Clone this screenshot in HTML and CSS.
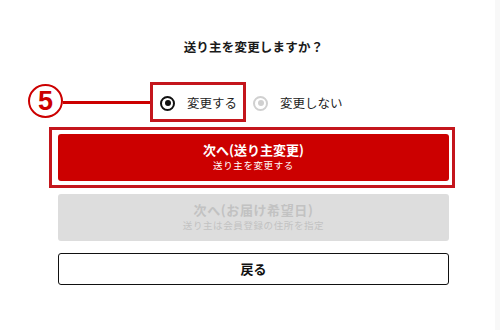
FILE: index.html
```html
<!DOCTYPE html>
<html lang="ja">
<head>
    <meta charset="UTF-8">
    <meta name="viewport" content="width=device-width, initial-scale=1.0">
    <title>送り主の変更</title>
    <link rel="stylesheet" href="styles.css">
</head>
<body>
    <div class="sender-panel">
        <h1 class="panel-title">送り主を変更しますか？</h1>

        <div class="choices">
            <label class="choice choice-on">
                <span class="radio"></span>
                <span class="choice-label">変更する</span>
                <span class="mark-box"></span>
                <span class="callout">
                    <span class="callout-num">5</span>
                    <span class="callout-line"></span>
                </span>
            </label>
            <label class="choice choice-off">
                <span class="radio"></span>
                <span class="choice-label">変更しない</span>
            </label>
        </div>

        <div class="actions">
            <button class="btn btn-primary">
                <span class="btn-main">次へ(送り主変更)</span>
                <span class="btn-sub">送り主を変更する</span>
                <span class="mark-box"></span>
            </button>
            <button class="btn btn-disabled">
                <span class="btn-main">次へ(お届け希望日)</span>
                <span class="btn-sub">送り主は会員登録の住所を指定</span>
            </button>
            <button class="btn btn-back">
                <span class="btn-main">戻る</span>
            </button>
        </div>
    </div>
</body>
</html>
```

FILE: styles.css
```css
body {
    margin: 0;
    height: 330px;
    font-family: "Noto Sans CJK JP", "Noto Sans", sans-serif;
    color: #1a1a1a;
    background: linear-gradient(to right, #fff 495px, #f8f8f8 495px);
}

.sender-panel {
    width: 391px;
    margin-left: 58px;
    padding-top: 38px;
}

.panel-title {
    margin: 0;
    font-size: 12.5px;
    line-height: 18px;
    font-weight: bold;
    text-align: center;
    letter-spacing: 0.2px;
}

.choices {
    display: flex;
    align-items: center;
    gap: 16px;
    height: 20px;
    margin-top: 37px;
    padding-left: 102px;
}

.choice {
    position: relative;
    display: flex;
    align-items: center;
    gap: 12px;
    height: 20px;
}

.radio {
    box-sizing: border-box;
    width: 15px;
    height: 15px;
    border: 2px solid #111;
    border-radius: 50%;
    display: flex;
    align-items: center;
    justify-content: center;
}

.radio::after {
    content: "";
    width: 6px;
    height: 6px;
    border-radius: 50%;
    background: #111;
}

.choice-off .radio {
    border-color: #d0d0d0;
}

.choice-off .radio::after {
    background: #d0d0d0;
}

.choice-label {
    font-size: 12.5px;
    line-height: 20px;
    color: #222;
}

/* annotation overlays */
.mark-box {
    position: absolute;
    top: -11px;
    left: -10px;
    right: -9px;
    bottom: -9px;
    border: 3px solid #c4161c;
    pointer-events: none;
}

.btn .mark-box {
    top: -7px;
    left: -9px;
    right: -6px;
    bottom: -7px;
}

.callout {
    position: absolute;
    left: -132px;
    top: -9px;
    display: flex;
    align-items: center;
}

.callout-num {
    box-sizing: border-box;
    width: 35px;
    height: 34px;
    border: 2px solid #cc0000;
    border-radius: 50%;
    color: #cc0000;
    font-family: "Liberation Sans", Arial, sans-serif;
    font-size: 27px;
    font-weight: bold;
    line-height: 30px;
    text-align: center;
}

.callout-line {
    width: 87px;
    height: 3px;
    margin-top: 2px;
    background: #cc0000;
}

.actions {
    display: flex;
    flex-direction: column;
    gap: 13px;
    margin-top: 21px;
}

.btn {
    position: relative;
    display: flex;
    flex-direction: column;
    align-items: center;
    justify-content: center;
    width: 100%;
    height: 47px;
    border: none;
    border-radius: 3px;
    padding: 0;
    font-family: inherit;
    cursor: pointer;
}

.btn-main {
    font-size: 13px;
    line-height: 16px;
    font-weight: bold;
}

.btn-sub {
    font-size: 9.5px;
    line-height: 15px;
    letter-spacing: 0.6px;
}

.btn-primary {
    background: #cc0000;
    color: #fff;
}

.btn-disabled {
    background: #dddddd;
    color: #c2c2c2;
    cursor: default;
}

.btn-disabled .btn-main {
    letter-spacing: 0.6px;
}

.btn-back {
    box-sizing: border-box;
    height: 32px;
    margin-top: -1px;
    background: #fff;
    border: 1.5px solid #111;
    color: #111;
}
```
